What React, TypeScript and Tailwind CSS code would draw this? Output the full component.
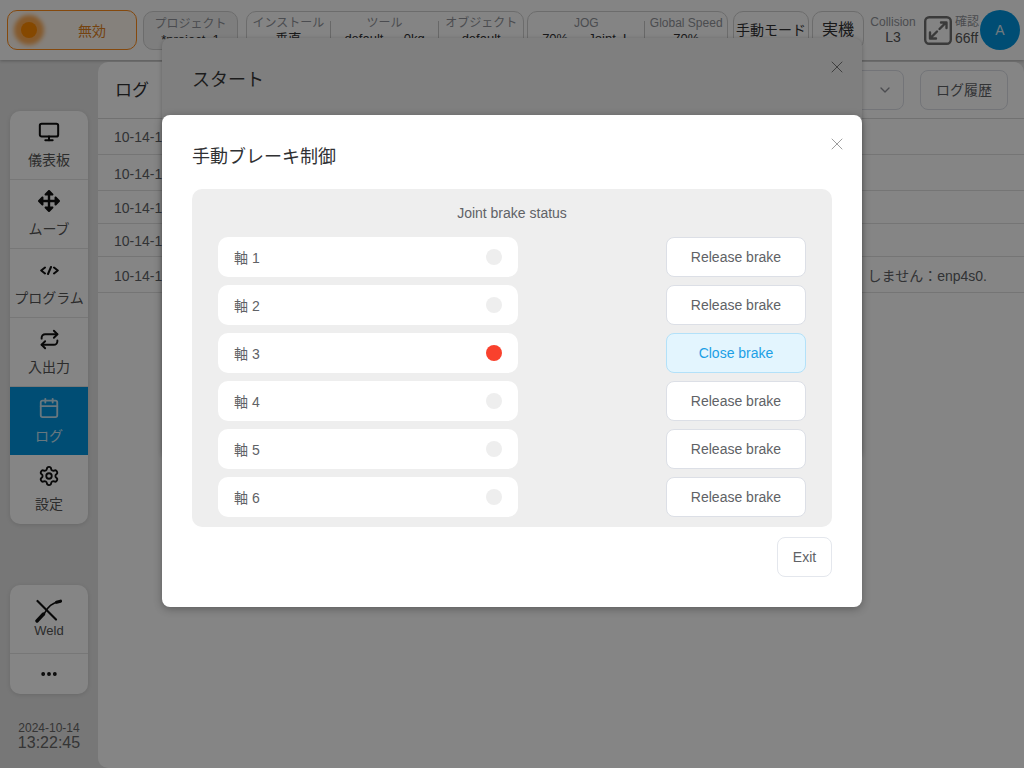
import React from "react";
import { Monitor, Repeat, Calendar, Settings, MoreHorizontal, ChevronDown, X } from "lucide-react";
import { FaArrowsAlt } from "react-icons/fa";

const font = { fontFamily: '"Liberation Sans","Noto Sans CJK JP",sans-serif' };

function Cell({ top, bottom, className = "" }: { top: string; bottom: string; className?: string }) {
  return (
    <div className={"flex flex-col items-center justify-center leading-[16px] " + className}>
      <span className="text-[12px] text-[#909399] whitespace-nowrap">{top}</span>
      <span className="text-[13px] text-[#303133] whitespace-nowrap">{bottom}</span>
    </div>
  );
}

function Divider() {
  return <div className="w-px h-[20px] bg-[#c8c8c8] self-start mt-[6px]" />;
}

function NavItem({ icon, label, active, className = "" }: { icon: React.ReactNode; label: string; active?: boolean; className?: string }) {
  return (
    <div className={"flex flex-col items-center justify-start pt-[8px] border-b border-[#e4e4e4] " + (active ? "bg-[#0095df] " : "") + className}>
      <div className="h-[26px] flex items-center justify-center">{icon}</div>
      <span className={"text-[14px] leading-[20px] mt-[5px] whitespace-nowrap " + (active ? "text-[#c8e4f2]" : "text-[#555]")}>{label}</span>
    </div>
  );
}

function LogRow({ h, text }: { h: string; text?: string }) {
  return (
    <div className={"flex items-center justify-between border-b border-[#e0e0e0] pl-[16px] pr-[37px] text-[14px] text-[#606266] " + h}>
      <span>10-14-13:22:30</span>
      {text && <span>{text}</span>}
    </div>
  );
}

function BrakeRow({ n, on }: { n: number; on?: boolean }) {
  return (
    <div className="flex items-center justify-between">
      <div className="w-[300px] h-[40px] bg-white rounded-[10px] flex items-center justify-between pl-[16px] pr-[16px]">
        <span className="text-[14px] text-[#606266] mt-[2px]">軸 {n}</span>
        <span className={"w-[16px] h-[16px] rounded-full " + (on ? "bg-[#f9412d]" : "bg-[#eeeeee]")} />
      </div>
      <button className={"w-[140px] h-[40px] rounded-[8px] border text-[14px] " + (on ? "bg-[#e3f5fe] border-[#b3e1f9] text-[#1c9fe6]" : "bg-white border-[#dcdfe6] text-[#606266]")}>
        {on ? "Close brake" : "Release brake"}
      </button>
    </div>
  );
}

export default function App() {
  return (
    <div style={font} className="relative w-[1024px] h-[768px] overflow-hidden bg-[#e4e4e4]">
      {/* base page */}
      <header className="h-[60px] bg-[#fdfdfd] shadow-[0_1px_3px_rgba(0,0,0,0.25)] flex items-center pl-[7px] pr-[4px]">
        <div className="w-[130px] h-[40px] rounded-[10px] border border-[#ff8c1a] bg-[#fff7ee] flex items-center pl-[13px]">
          <span className="w-[16px] h-[16px] rounded-full bg-[#ff8a00] shadow-[0_0_4px_7px_rgba(255,140,20,0.7)]" />
          <span className="ml-[41px] mt-[2px] text-[14px] text-[#e08020]">無効</span>
        </div>
        <div className="ml-[6px] w-[95px] h-[39px] rounded-[10px] border border-[#d0d0d0] bg-[#f2f2f2] flex justify-center pt-[3px]">
          <Cell top="プロジェクト" bottom="*project_1" />
        </div>
        <div className="ml-[8px] w-[278px] h-[39px] rounded-[10px] border border-[#d0d0d0] flex pt-[3px]">
          <Cell top="インストール" bottom="垂直" className="w-[83px] self-start" />
          <Divider />
          <Cell top="ツール" bottom="default — 0kg" className="w-[108px] self-start" />
          <Divider />
          <Cell top="オブジェクト" bottom="default" className="w-[84px] self-start" />
        </div>
        <div className="ml-[3px] w-[201px] h-[39px] rounded-[10px] border border-[#d0d0d0] flex pt-[3px]">
          <Cell top="JOG" bottom="70% — Joint_L" className="w-[117px] self-start" />
          <Divider />
          <Cell top="Global Speed" bottom="70%" className="w-[82px] self-start" />
        </div>
        <div className="ml-[5px] w-[76px] h-[39px] rounded-[10px] border border-[#d0d0d0] flex items-center justify-center text-[14px] text-[#303133] whitespace-nowrap">手動モード</div>
        <div className="ml-[3px] w-[52px] h-[39px] rounded-[10px] border border-[#d0d0d0] flex items-center justify-center text-[16px] text-[#303133]">実機</div>
        <div className="ml-[6px] w-[46px] flex flex-col items-center leading-[15px]">
          <span className="text-[12px] text-[#909399]">Collision</span>
          <span className="text-[14px] text-[#555]">L3</span>
        </div>
        <svg className="ml-[8px]" width="28" height="29" viewBox="0 0 28 29" fill="none" stroke="#707070" strokeWidth="2.4" strokeLinecap="round" strokeLinejoin="round">
          <rect x="1.2" y="1.2" width="25.6" height="26.6" rx="4" />
          <path d="M17 6.5h5.5V12M22 6.5L15.5 13M6 16.5v6h6M6 22.5l7-7" />
        </svg>
        <div className="ml-[3px] flex flex-col leading-[16px] w-[25px] overflow-hidden whitespace-nowrap">
          <span className="text-[12px] text-[#909399]">確認</span>
          <span className="text-[14px] text-[#555]">66ff</span>
        </div>
        <div className="w-[40px] h-[40px] rounded-full bg-[#0095df] text-[#d8e8f2] flex items-center justify-center text-[14px]">A</div>
      </header>

      <div className="flex h-[708px]">
        <aside className="w-[98px] shrink-0 flex flex-col items-center">
          <div className="mt-[51px] w-[78px] rounded-[10px] bg-white overflow-hidden shadow-[0_1px_4px_rgba(0,0,0,0.12)]">
            <NavItem className="h-[69px]" icon={<Monitor size={22} strokeWidth={2.2} color="#111" />} label="儀表板" />
            <NavItem className="h-[69px]" icon={<FaArrowsAlt size={22} color="#111" />} label="ムーブ" />
            <NavItem className="h-[69px]" icon={
              <svg width="19" height="9" viewBox="0 0 19 9" fill="none" stroke="#111" strokeWidth="2" strokeLinecap="round" strokeLinejoin="round"><path d="M5 1.5L1.2 4.5 5 7.5M14 1.5l3.8 3-3.8 3M11 1L8 8" /></svg>
            } label="プログラム" />
            <NavItem className="h-[69px]" icon={<Repeat size={21} strokeWidth={2.2} color="#111" />} label="入出力" />
            <NavItem active className="h-[68px] border-b-0" icon={<Calendar size={22} strokeWidth={2} color="#c8e4f2" />} label="ログ" />
            <NavItem className="h-[69px] border-b-0" icon={<Settings size={22} strokeWidth={2} color="#111" />} label="設定" />
          </div>
          <div className="mt-[61px] w-[78px] rounded-[10px] bg-white overflow-hidden shadow-[0_1px_4px_rgba(0,0,0,0.12)]">
            <div className="h-[69px] border-b border-[#e4e4e4] flex flex-col items-center pt-[14px]">
              <svg width="28" height="24" viewBox="0 0 28 24" fill="none" stroke="#111" strokeLinecap="round">
                <path d="M2.5 2L21 20.5" strokeWidth="2.2" />
                <path d="M9 15C13 7 17 4 25 2.5" strokeWidth="1.6" />
                <path d="M2 22l6.5-7" strokeWidth="3.4" />
                <path d="M21.5 3.2l4-1" strokeWidth="3.2" />
              </svg>
              <span className="text-[13px] leading-[14px] text-[#555] mt-[1px]">Weld</span>
            </div>
            <div className="h-[40px] flex items-center justify-center"><MoreHorizontal size={20} strokeWidth={2.6} color="#111" /></div>
          </div>
          <div className="mt-[27px] flex flex-col items-center">
            <span className="text-[12px] leading-[14px] text-[#666]">2024-10-14</span>
            <span className="text-[16px] leading-[16px] text-[#666]">13:22:45</span>
          </div>
        </aside>

        <main className="flex-1 mt-[2px] bg-white rounded-t-[10px] rounded-bl-[10px] flex flex-col">
          <div className="h-[57px] border-b border-[#d8d8d8] flex items-center pl-[17px] pr-[16px]">
            <span className="text-[17px] mt-[1px] text-[#303133]">ログ</span>
            <div className="ml-auto w-[120px] h-[40px] border border-[#dcdfe6] rounded-[8px] flex items-center justify-end pr-[10px]"><ChevronDown size={16} color="#909399" /></div>
            <div className="ml-[16px] w-[88px] h-[40px] border border-[#dcdfe6] rounded-[8px] flex items-center justify-center text-[14px] text-[#606266]">ログ履歴</div>
          </div>
          <LogRow h="h-[36px] pt-[2px]" />
          <LogRow h="h-[36px] pt-[3px]" />
          <LogRow h="h-[33px] pt-[2px]" />
          <LogRow h="h-[33px] pt-[2px]" />
          <LogRow h="h-[36px] pt-[3px]" text="しません：enp4s0." />
        </main>
      </div>

      {/* dim layer */}
      <div className="absolute inset-0 bg-black/[0.48]" />

      {/* lower dialog, already dimmed */}
      <div className="absolute left-[162px] top-[38px] w-[700px] h-[420px] bg-[#7f7f7f] rounded-[8px] shadow-[0_1px_4px_rgba(0,0,0,0.25)] pl-[30px] pt-[29px]">
        <span className="text-[18px] leading-[26px] text-[#1c1c1c]">スタート</span>
        <X className="absolute right-[15px] top-[19px] text-[#333333]" size={20} strokeWidth={1} />
      </div>

      {/* top dialog */}
      <div className="absolute left-[162px] top-[115px] w-[700px] h-[492px] bg-white rounded-[8px] shadow-[0_2px_8px_rgba(0,0,0,0.3)] px-[30px] pt-[29px] flex flex-col">
        <X className="absolute right-[15px] top-[19px] text-[#8a8a8a]" size={20} strokeWidth={1} />
        <div className="text-[18px] leading-[26px] text-[#303133]">手動ブレーキ制御</div>
        <div className="mt-[19px] h-[338px] bg-[#eeeeee] rounded-[10px] px-[26px] flex flex-col">
          <div className="h-[48px] flex items-center justify-center text-[14px] text-[#606266]">Joint brake status</div>
          <div className="flex flex-col gap-[8px]">
            <BrakeRow n={1} />
            <BrakeRow n={2} />
            <BrakeRow n={3} on />
            <BrakeRow n={4} />
            <BrakeRow n={5} />
            <BrakeRow n={6} />
          </div>
        </div>
        <div className="flex justify-end mt-[10px]">
          <button className="w-[55px] h-[40px] rounded-[8px] border border-[#e4e7ed] bg-white text-[14px] text-[#606266]">Exit</button>
        </div>
      </div>
    </div>
  );
}
